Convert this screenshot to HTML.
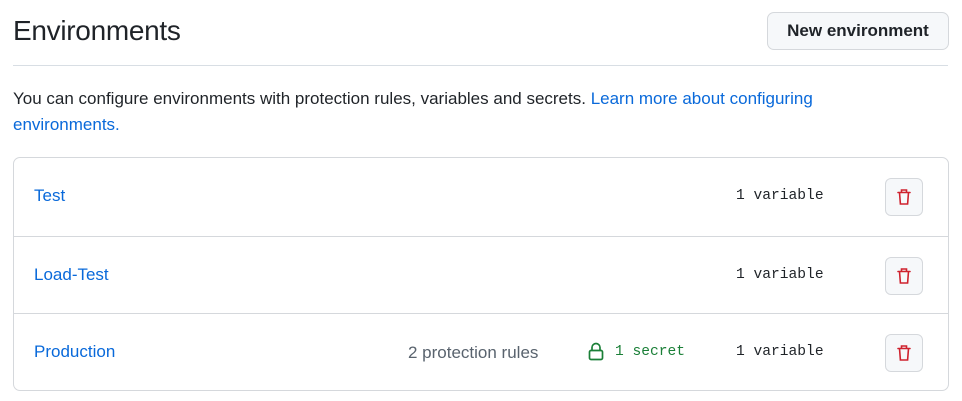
<!DOCTYPE html>
<html><head><style>
body{margin:0;width:962px;height:401px;background:#fff;font-family:"Liberation Sans",sans-serif;color:#1f2328;position:relative;overflow:hidden}
.a{position:absolute}
h1{position:absolute;left:13px;top:15px;margin:0;font-weight:400;font-size:28px;letter-spacing:-0.3px}
.btn{left:767px;top:12px;width:180px;height:36px;border:1px solid #d5d8dc;border-radius:7px;background:#f6f8fa;font-size:17px;line-height:36px;text-align:center;font-weight:600}
.hr{left:13px;top:65px;width:935px;height:1px;background:#d8dee4}
p{position:absolute;left:13px;top:86px;margin:0;font-size:17px;line-height:26px;width:880px}
a{color:#0969da;text-decoration:none}
.box{left:13px;top:157px;width:934px;height:232px;border:1px solid #d5d8dc;border-radius:7px}
.row{position:absolute;left:0;width:934px;height:77px;border-top:1px solid #d5d8dc}
.row:first-child{border-top:none}
.name{position:absolute;left:20px;top:28px;font-size:17px;color:#0969da}
.var{position:absolute;left:722px;top:30px;font-family:"Liberation Mono",monospace;font-size:14.6px}
.del{position:absolute;left:871px;top:20px;width:36px;height:36px;border:1px solid #d5d8dc;border-radius:6px;background:#f6f8fa}
.del svg{position:absolute;left:10px;top:9px}
</style></head><body>
<h1>Environments</h1>
<div class="a btn">New environment</div>
<div class="a hr"></div>
<p>You can configure environments with protection rules, variables and secrets. <a>Learn more about configuring environments.</a></p>
<div class="a box">
<div class="row" style="top:0"><span class="name">Test</span><span class="var">1 variable</span><div class="del"><svg width="16" height="18" viewBox="0 0 16 18" fill="none" stroke="#cf222e" stroke-width="1.6" stroke-linecap="round"><path d="M2 4.5h12M5.5 4.5V2h5v2.5M3.5 4.5l.9 11.5h7.2l.9-11.5"/></svg></div></div>
<div class="row" style="top:78px"><span class="name">Load-Test</span><span class="var">1 variable</span><div class="del"><svg width="16" height="18" viewBox="0 0 16 18" fill="none" stroke="#cf222e" stroke-width="1.6" stroke-linecap="round"><path d="M2 4.5h12M5.5 4.5V2h5v2.5M3.5 4.5l.9 11.5h7.2l.9-11.5"/></svg></div></div>
<div class="row" style="top:155px"><span class="name">Production</span>
<span style="position:absolute;left:394px;top:29px;font-size:17px;color:#59636e">2 protection rules</span>
<svg style="position:absolute;left:574px;top:28px" width="16" height="19" viewBox="0 0 16 19" fill="none" stroke="#1a7f37" stroke-width="1.7"><rect x="1.5" y="8.5" width="13" height="9" rx="1.5"/><path d="M4 8.5V5.5a4 4 0 0 1 8 0V8.5"/></svg>
<span style="position:absolute;left:601px;top:30px;font-family:'Liberation Mono',monospace;font-size:14.6px;color:#1a7f37">1 secret</span>
<span class="var">1 variable</span><div class="del"><svg width="16" height="18" viewBox="0 0 16 18" fill="none" stroke="#cf222e" stroke-width="1.6" stroke-linecap="round"><path d="M2 4.5h12M5.5 4.5V2h5v2.5M3.5 4.5l.9 11.5h7.2l.9-11.5"/></svg></div></div>
</div>
</body></html>
